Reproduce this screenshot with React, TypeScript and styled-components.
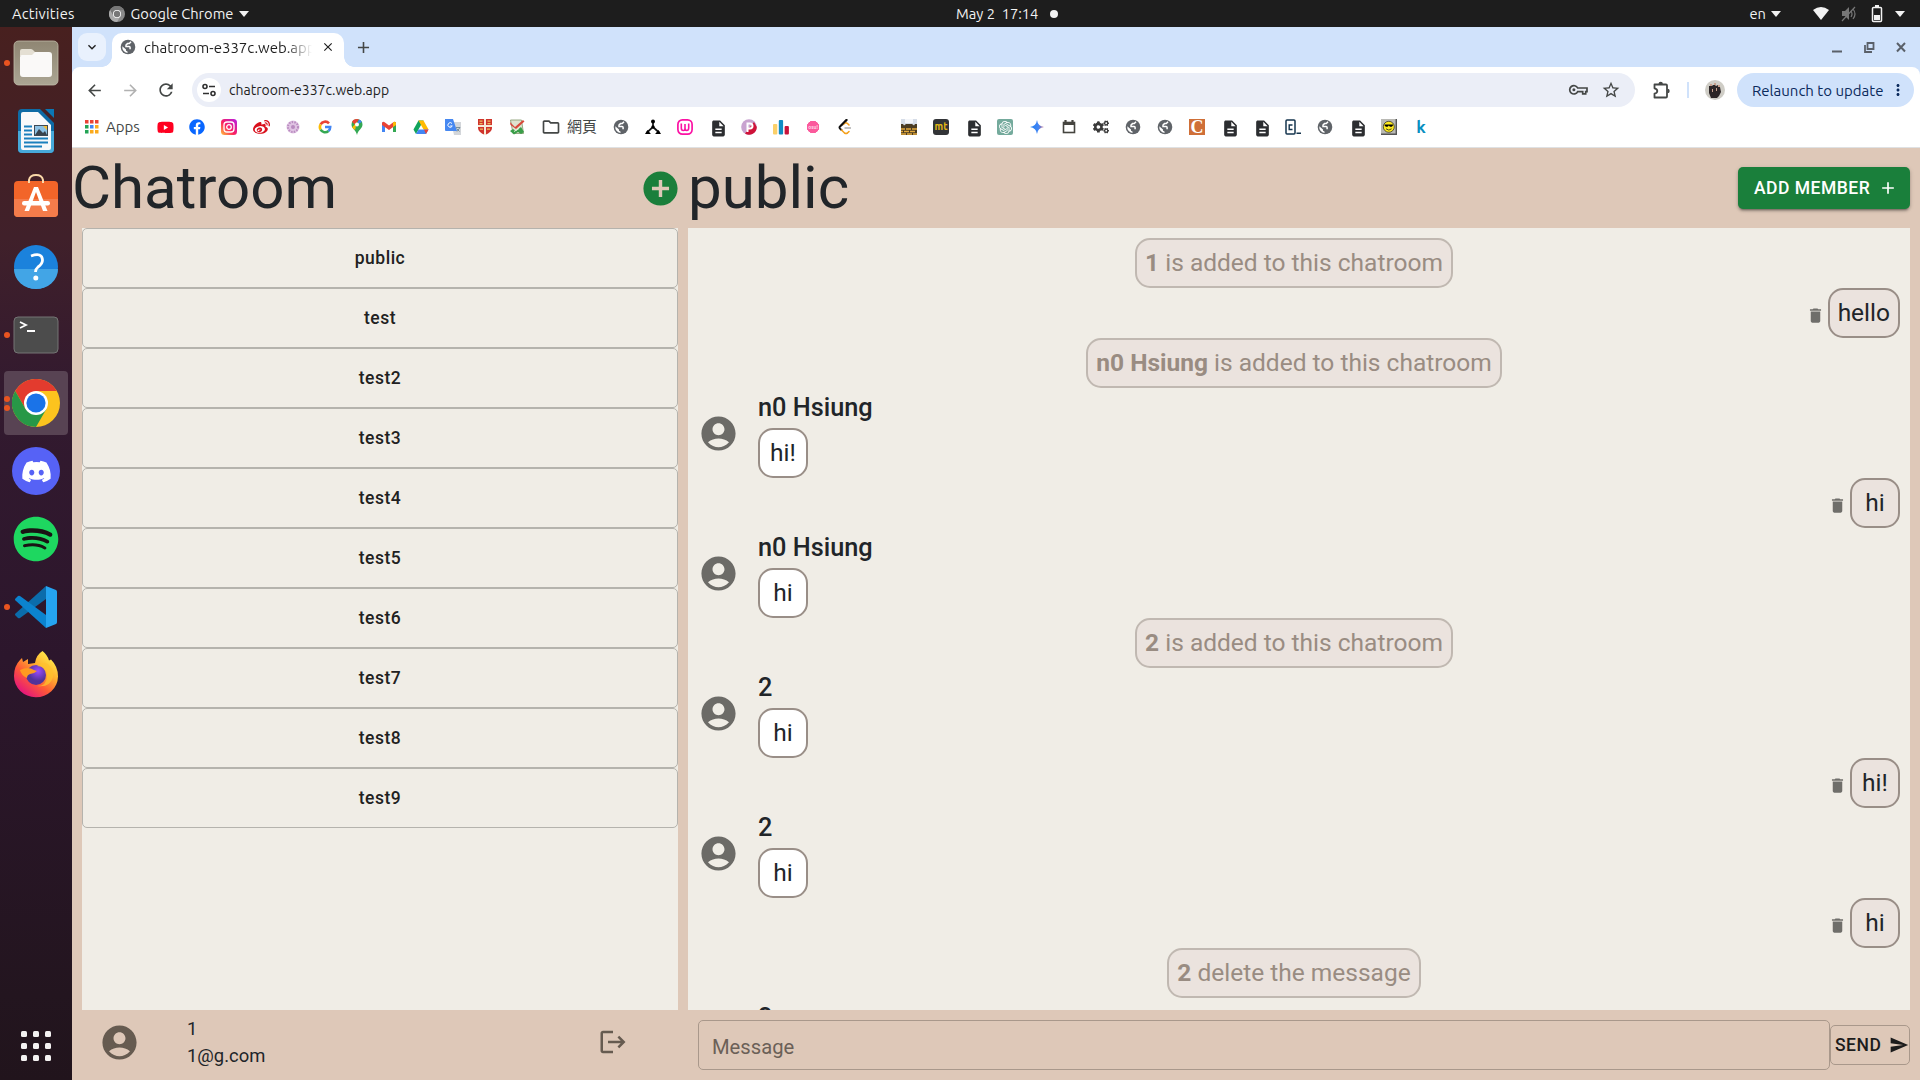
import React from "react";
import styled, { createGlobalStyle, css } from "styled-components";
import {
  MdAccountCircle,
  MdAdd,
  MdAddCircle,
  MdArrowBack,
  MdArrowForward,
  MdClose,
  MdDelete,
  MdExpandMore,
  MdMoreVert,
  MdOutlineFolder,
  MdRefresh,
  MdSend,
  MdStarBorder,
  MdDescription,
} from "react-icons/md";
import { FaDiscord, FaSpotify, FaFacebook, FaYoutube, FaWeibo, FaCogs } from "react-icons/fa";
import { SiOpenai } from "react-icons/si";

const ui = `Ubuntu, "Noto Sans", "Noto Sans CJK TC", sans-serif`;

const Global = createGlobalStyle`
  *, *::before, *::after { box-sizing: border-box; }
  body { margin: 0; background: #1d1d1d; overflow: hidden; }
  svg { display: block; flex: none; }
  button { font: inherit; margin: 0; padding: 0; border: 0; background: none; }
`;

const Desktop = styled.div`
  width: 1920px;
  height: 1080px;
  display: grid;
  grid-template: 27px 1053px / 72px 1848px;
  font-family: ${ui};
  overflow: hidden;
`;

/* ---------- system bar ---------- */
const TopBar = styled.header`
  grid-column: 1 / 3;
  display: grid;
  grid-template-columns: 944px auto 1fr;
  align-items: center;
  padding: 0 13px 0 12px;
  background: #1d1d1d;
  color: #f2f2f2;
  font-size: 14.67px;
  line-height: 27px;
  white-space: pre;
`;
const BarGroup = styled.div<{ $gap?: number; $end?: boolean }>`
  display: flex;
  align-items: center;
  gap: ${(p) => p.$gap ?? 6}px;
  justify-content: ${(p) => (p.$end ? "flex-end" : "flex-start")};
`;
const BarText = styled.span<{ $track?: number; $after?: number }>`
  letter-spacing: ${(p) => p.$track ?? 0}px;
  margin-right: ${(p) => p.$after ?? 0}px;
`;
const Caret = styled.i<{ $before?: number; $after?: number }>`
  border: 5px solid transparent;
  border-top: 6px solid #f2f2f2;
  border-bottom: 0;
  margin-left: ${(p) => p.$before ?? 0}px;
  margin-right: ${(p) => p.$after ?? 0}px;
`;
const Notice = styled.i`
  width: 8px;
  height: 8px;
  border-radius: 50%;
  background: #f2f2f2;
`;
const Tray = styled.span<{ $before: number }>`
  margin-left: ${(p) => p.$before}px;
`;

/* ---------- dock ---------- */
const Dock = styled.nav`
  display: flex;
  flex-direction: column;
  justify-content: space-between;
  padding: 4px 0 19px;
  background: linear-gradient(180deg, #48201f 0%, #40202a 20%, #331a2f 34%, #2c162c 60%, #23151f 92%, #21141c 100%);
`;
const DockItem = styled.div<{ $active?: boolean }>`
  position: relative;
  width: 64px;
  height: 64px;
  margin: 0 4px 4px;
  display: grid;
  place-items: center;
  border-radius: 4px;
  background: ${(p) => (p.$active ? "#584353" : "transparent")};
`;
const Running = styled.span`
  position: absolute;
  left: 0;
  top: 0;
  height: 100%;
  display: flex;
  flex-direction: column;
  justify-content: center;
  gap: 3px;
`;
const Dot = styled.i`
  width: 6px;
  height: 6px;
  border-radius: 50%;
  background: #e95420;
`;
const Launcher = styled.div`
  display: grid;
  grid-template-columns: repeat(3, 6px);
  gap: 6px;
  justify-content: center;
  i {
    height: 6px;
    border-radius: 1.5px;
    background: #f4f2f2;
  }
`;

/* ---------- browser ---------- */
const Browser = styled.main`
  display: grid;
  grid-template-rows: 40px 46px 34px 1px 932px;
  background: #fff;
  overflow: hidden;
`;
const Tabs = styled.div`
  display: flex;
  align-items: flex-end;
  background: #d0e2fb;
  padding-left: 6px;
`;
const TabSearch = styled.button`
  width: 28px;
  height: 28px;
  margin: 0 6px 6px 0;
  border-radius: 9px;
  background: #e9f1fd;
  display: grid;
  place-items: center;
  color: #1f1f1f;
`;
const Tab = styled.div`
  position: relative;
  width: 232px;
  height: 34px;
  padding: 0 9px 6px 8px;
  display: flex;
  align-items: center;
  background: #fff;
  border-radius: 10px 10px 0 0;
  color: #1f1f1f;
  font-size: 15px;
  &::before,
  &::after {
    content: "";
    position: absolute;
    bottom: 0;
    width: 10px;
    height: 10px;
  }
  &::before {
    left: -10px;
    background: radial-gradient(circle at 0 0, transparent 9.5px, #fff 10px);
  }
  &::after {
    right: -10px;
    background: radial-gradient(circle at 100% 0, transparent 9.5px, #fff 10px);
  }
`;
const TabTitle = styled.span`
  flex: 1;
  margin-left: 8px;
  margin-right: 9px;
  overflow: hidden;
  white-space: nowrap;
  -webkit-mask-image: linear-gradient(90deg, #000 84%, transparent);
  mask-image: linear-gradient(90deg, #000 84%, transparent);
`;
const NewTab = styled.button`
  margin: 0 0 10px 10px;
  color: #444746;
`;
const WindowKeys = styled.div`
  margin: 0 11px 12px auto;
  display: flex;
  align-items: center;
  gap: 16px;
  color: #5a6069;
`;
const Toolbar = styled.div`
  display: flex;
  align-items: center;
  padding: 0 6px 0 12px;
  color: #444746;
  background: linear-gradient(#d0e2fb, #d0e2fb) no-repeat;
  background-size: 100% 10px;
  position: relative;
  z-index: 0;
  &::before {
    content: "";
    position: absolute;
    inset: 0;
    z-index: -1;
    background: #fff;
    border-radius: 8px 8px 0 0;
  }
`;
const NavKey = styled.button<{ $dim?: boolean }>`
  width: 20px;
  margin-right: 16px;
  display: grid;
  justify-content: end;
  color: ${(p) => (p.$dim ? "#b1b1b1" : "#444746")};
`;
const Omnibox = styled.div`
  width: 1443px;
  height: 34px;
  border-radius: 17px;
  background: #ebeef7;
  display: flex;
  align-items: center;
  padding: 0 14px 0 5px;
  color: #1f1f1f;
  font-size: 14px;
`;
const SiteInfo = styled.span`
  width: 24px;
  height: 24px;
  border-radius: 50%;
  background: #fff;
  display: grid;
  place-items: center;
  margin-right: 8px;
`;
const Url = styled.span`
  flex: 1;
`;
const Star = styled.span`
  margin-left: 13px;
  color: #444746;
`;
const Extension = styled.span`
  margin-left: 16px;
`;
const Rule = styled.i`
  width: 2px;
  height: 16px;
  background: #d0e2fb;
  margin: 0 16px 0 16px;
`;
const Relaunch = styled.button`
  width: 177px;
  height: 34px;
  margin-left: 12px;
  padding: 0 7px 0 15px;
  border-radius: 17px;
  background: #d0e2fb;
  color: #0b2a5c;
  display: flex;
  align-items: center;
  justify-content: space-between;
  font-size: 15px;
  white-space: nowrap;
`;
const Bookmarks = styled.div`
  display: flex;
  align-items: center;
  gap: 16px;
  padding: 0 0 6px 12px;
  color: #444746;
  font-size: 15px;
`;
const Labelled = styled.div<{ $width: number; $gap: number }>`
  width: ${(p) => p.$width}px;
  height: 18px;
  line-height: 18px;
  display: flex;
  align-items: center;
  gap: ${(p) => p.$gap}px;
  white-space: nowrap;
`;
const Mark = styled.span<{ $bg?: string; $fg?: string; $round?: number; $size?: number; $serif?: boolean }>`
  width: 16px;
  height: 16px;
  display: grid;
  place-items: center;
  background: ${(p) => p.$bg ?? "transparent"};
  color: ${(p) => p.$fg ?? "#3c4043"};
  border-radius: ${(p) => p.$round ?? 0}px;
  font: 700 ${(p) => p.$size ?? 10}px/16px ${(p) => (p.$serif ? `"Liberation Serif", serif` : ui)};
`;
const Divider = styled.i`
  background: #dfe1e3;
`;

/* ---------- chat page ---------- */
const Page = styled.section`
  display: grid;
  grid-template: 80px 782px 70px / 616px 1232px;
  background: #dec8b8;
  color: #212529;
  font-family: Roboto, sans-serif;
  overflow: hidden;
`;
const Head = styled.div`
  display: flex;
  align-items: center;
  justify-content: space-between;
  padding-right: 10px;
`;
const Title = styled.h1`
  margin: 0;
  font-weight: 400;
  font-size: 60px;
  line-height: 72px;
`;
const RoundAdd = styled.button`
  margin-right: -2.5px;
  color: #1a7f3b;
`;
const AddMember = styled.button`
  width: 172px;
  height: 42px;
  display: flex;
  align-items: center;
  padding-left: 16px;
  gap: 8px;
  border-radius: 5px;
  background: #1a7f3b;
  color: #fff;
  font-weight: 500;
  font-size: 17.5px;
  letter-spacing: 0.5px;
  white-space: nowrap;
  box-shadow: 0 3px 2px -2px rgba(0, 0, 0, 0.3), 0 2px 3px rgba(0, 0, 0, 0.2), 0 1px 5px rgba(0, 0, 0, 0.12);
`;
const Rooms = styled.div`
  margin: 0 10px;
  background: #f0ede6;
`;
const Room = styled.button`
  display: block;
  width: 100%;
  height: 60px;
  border: 1px solid #b5b3ad;
  border-radius: 5px;
  color: #212121;
  font-weight: 500;
  font-size: 17.5px;
  letter-spacing: 0.5px;
`;
const Feed = styled.div`
  margin-right: 10px;
  padding: 10px;
  background: #f0ede6;
  overflow: hidden;
  font-size: 24.5px;
`;
const Line = styled.div<{ $side: "center" | "right" }>`
  display: flex;
  align-items: center;
  justify-content: ${(p) => (p.$side === "center" ? "center" : "flex-end")};
  padding-right: ${(p) => (p.$side === "center" ? 10 : 0)}px;
  height: 50px;
`;
const Bubble = styled.div<{ $tone: "own" | "other" | "system" }>`
  height: 50px;
  min-width: 50px;
  width: fit-content;
  padding: 0 8px;
  border: 2px solid #998e87;
  border-radius: 15px;
  line-height: 46px;
  text-align: center;
  white-space: nowrap;
  background: ${(p) => (p.$tone === "other" ? "#fff" : "#ebe3de")};
  ${(p) =>
    p.$tone === "system" &&
    css`
      border-color: #c0b8b1;
      color: #998c82;
    `}
`;
const Trash = styled.span`
  margin: 4px 3px 0 0;
  color: #6f6e6a;
`;
const Incoming = styled.div`
  height: 90px;
  display: grid;
  grid-template-columns: 60px auto;
  align-items: center;
  color: #6c6b67;
  > svg {
    margin-top: 1px;
  }
`;
const Sender = styled.div`
  color: #212529;
  height: 90px;
  > p {
    margin: 0;
    height: 40px;
    font-weight: 500;
    font-size: 25.3px;
    line-height: 39px;
  }
`;
const Account = styled.div`
  display: flex;
  align-items: center;
  padding: 0 60px 6px 26.5px;
  color: #665b50;
`;
const Who = styled.div`
  flex: 1;
  margin-left: 47.5px;
  color: #212529;
  font-size: 18.4px;
  line-height: 27px;
`;
const Composer = styled.div`
  display: flex;
  align-items: center;
  padding: 0 10px;
`;
const Field = styled.div`
  width: 1132px;
  height: 50px;
  padding: 2px 13px 0;
  border: 1px solid #a9988b;
  border-radius: 5px;
  color: #6b6057;
  font-size: 20.2px;
  line-height: 48px;
`;
const Send = styled.button`
  width: 80px;
  height: 40px;
  display: flex;
  align-items: center;
  justify-content: space-between;
  padding: 0 0 0 4px;
  border: 1px solid #a9988b;
  border-radius: 5px;
  color: #1c1c1c;
  font-weight: 500;
  font-size: 17.5px;
  letter-spacing: 0.5px;
`;

/* ---------- dock artwork ---------- */
const FilesArt = () => (
  <svg width="46" height="46" viewBox="0 0 46 46">
    <defs>
      <linearGradient id="fa" x2="0" y2="1"><stop stopColor="#8f8673" /><stop offset="1" stopColor="#aba593" /></linearGradient>
    </defs>
    <rect x="1" y="1" width="44" height="44" rx="4.5" fill="url(#fa)" stroke="#c2bca9" strokeWidth=".8" />
    <path d="M7 16v-5q0-2 2-2h9q1.500 0 2.500 1.500L22 12h14v6z" fill="#e4dfd3" />
    <path d="M7 17q0-2 2-2h10l3-3h14q3 0 3 3v19q0 3-3 3H10q-3 0-3-3z" fill="#faf9f8" />
  </svg>
);
const WriterArt = () => (
  <svg width="38" height="46" viewBox="0 0 38 46">
    <path d="M5 1h18l14 14v26q0 4-4 4H5q-4 0-4-4V5q0-4 4-4z" fill="#0e6ba5" />
    <path d="M1 23h36v18q0 4-4 4H5q-4 0-4-4z" fill="#47a9da" />
    <path d="M6 4h15l13 13v23q0 2-2 2H6q-2 0-2-2V6q0-2 2-2z" fill="#f8f9fa" />
    <path d="M28 1h9v9z" fill="#0b77b5" />
    <path d="M7 18.500h8M7 22.500h8M7 26.500h8M7 30.500h24M7 34.500h24M7 38.500h18" stroke="#1a80bd" strokeWidth="2" />
    <rect x="17" y="17" width="14" height="11" fill="#3d4a55" />
    <path d="M18 18h12v9H18z" fill="#8bc1e4" /><path d="m18 27 4-6 4 4 2-2 2 4z" fill="#38434d" />
    <path d="M26 18h4v4z" fill="#f4bd35" />
  </svg>
);
const SoftwareArt = () => (
  <svg width="46" height="46" viewBox="0 3 46 46" overflow="visible">
    <rect x="1" y="8" width="44" height="36" rx="4" fill="#f26529" />
    <path d="M1 26h44v14q0 4-4 4H5q-4 0-4-4z" fill="#f47c4b" />
    <path d="M16 10V7q1-5 7-5t7 5v3" fill="none" stroke="#fbd9a8" strokeWidth="2" />
    <path d="M21 14h4l9.500 24h-4.500L23 19l-7 19h-4.500z" fill="#fff" />
    <rect x="9" y="28" width="28" height="4.500" rx="2.200" fill="#fff" />
  </svg>
);
const HelpArt = () => (
  <svg width="46" height="46" viewBox="0 0 46 46">
    <circle cx="23" cy="23" r="22" fill="#1b82dc" />
    <path d="M1 25a22 20 0 0 0 44 0z" fill="#42a5e6" />
    <path d="M18 12q11-4 11.500 4 0 4-4.500 7-2.500 2-2.500 5" fill="none" stroke="#fff" strokeWidth="2.800" />
    <circle cx="22.800" cy="34" r="2.500" fill="#fff" />
  </svg>
);
const TerminalArt = () => (
  <svg width="46" height="38" viewBox="0 0 46 38">
    <rect x="1" y="1" width="44" height="36" rx="4" fill="#4c4c4c" stroke="#747474" />
    <path d="m7 6 6 3-6 3M14 15h8" fill="none" stroke="#fff" strokeWidth="1.800" />
  </svg>
);
const ChromeArt = ({ size = 48, mono = false }: { size?: number; mono?: boolean }) => (
  <svg width={size} height={size} viewBox="0 0 48 48">
    <circle cx="24" cy="24" r="24" fill={mono ? "#8a8a8a" : "#fcc31e"} />
    <path d="M3.200 12A24 24 0 0 1 44.800 12H24L13.600 30z" fill={mono ? "#777" : "#e33b2e"} />
    <path d="M3.200 12A24 24 0 0 0 24 48l10.400-18L24 36l-10.400-6z" fill={mono ? "#aaa" : "#279847"} />
    <circle cx="24" cy="24" r="12" fill="#fff" />
    <circle cx="24" cy="24" r="9.600" fill={mono ? "#777" : "#1a73e8"} />
  </svg>
);
const Disc = styled.span<{ $size: number; $bg: string }>`
  width: ${(p) => p.$size}px;
  height: ${(p) => p.$size}px;
  border-radius: 50%;
  display: grid;
  place-items: center;
  background: ${(p) => p.$bg};
`;
const DiscordArt = () => (
  <Disc $size={48} $bg="#5662f6"><FaDiscord size={31} color="#fff" /></Disc>
);
const SpotifyArt = () => (
  <Disc $size={46} $bg="radial-gradient(circle, #191414 19px, transparent 20px)"><FaSpotify size={46} color="#1ed760" /></Disc>
);
const CodeArt = () => (
  <svg width="42" height="42" viewBox="0 0 42 42">
    <path d="M31 0v13L5 32q-1 .7-2 0l-2.500-2.500q-1-1 0-2z" fill="#0b6cab" />
    <path d="M31 42V29L5 10q-1-.7-2 0L.5 12.500q-1 1 0 2z" fill="#0b83cf" />
    <path d="m31 0 10 4q1 .5 1 2v30q0 1.500-1 2l-10 4z" fill="#25a4f1" />
  </svg>
);
const FirefoxArt = () => (
  <svg width="46" height="46" viewBox="0 1 46 46" overflow="visible">
    <defs>
      <linearGradient id="ff" x1=".9" y1=".1" x2=".25" y2=".95">
        <stop stopColor="#fff04e" /><stop offset=".35" stopColor="#ffb02e" /><stop offset=".65" stopColor="#ff5a36" /><stop offset="1" stopColor="#e5177b" />
      </linearGradient>
      <radialGradient id="fp" cx=".6" cy=".3"><stop stopColor="#9c4bff" /><stop offset="1" stopColor="#503399" /></radialGradient>
    </defs>
    <path d="M29.500 0q5 4 6.500 9.500l2-1q7 7 7 17A22 21 0 0 1 1 25Q1 15 7 9l2-2 1 4 5-3v5l7-1q1-8 7.500-12z" fill="url(#ff)" />
    <circle cx="23" cy="24" r="10" fill="url(#fp)" />
    <path d="M7 19q8-4 14 0l3 1q-3 3-7 3-3 1-3 4-6-3-7-8z" fill="#ff9a20" />
    <path d="M24 15q10 0 10 10t-10 10q13 2 16-9 1-10-7-14-4-1-9 3z" fill="#ffc22e" opacity=".75" />
  </svg>
);

/* ---------- bookmark artwork ---------- */
const Svg = ({ children }: { children: React.ReactNode }) => (
  <svg width="16" height="16" viewBox="0 0 16 16">{children}</svg>
);
const Globe = () => (
  <Svg>
    <circle cx="8" cy="8" r="7.300" fill="#5f6368" />
    <path d="M11 2.800 9.300 4.600H7.500L6 6v1.400h3.200q.9 0 .9 1v1.800" fill="none" stroke="#fff" strokeWidth="1.500" />
    <path d="M2.300 7.200 6 10.500v1.300l1.500.8v1.300A6 6 0 0 1 2.300 7.200z" fill="#fff" />
  </Svg>
);
const Doc = () => <MdDescription size={19} color="#2b2d30" />;
const AppsGrid = () => (
  <Svg>
    {["#ea4335", "#ea4335", "#ea4335", "#23a455", "#4285f4", "#fbaa1c", "#23a455", "#fbaa1c", "#fbaa1c"].map((c, i) => (
      <rect key={i} x={1 + (i % 3) * 5} y={1 + Math.floor(i / 3) * 5} width="3.500" height="3.500" fill={c} />
    ))}
  </Svg>
);
const Insta = () => (
  <Svg>
    <defs><linearGradient id="ig" x1="0" y1="1" x2="1" y2="0"><stop stopColor="#ffc33a" /><stop offset=".45" stopColor="#fb1f60" /><stop offset="1" stopColor="#b31fe8" /></linearGradient></defs>
    <rect width="16" height="16" rx="3.500" fill="url(#ig)" />
    <rect x="3" y="3" width="10" height="10" rx="3" fill="none" stroke="#fff" strokeWidth="1.300" />
    <circle cx="8" cy="8" r="2.300" fill="none" stroke="#fff" strokeWidth="1.300" />
  </Svg>
);
const Google = () => (
  <Svg>
    <g fill="none" strokeWidth="2.600">
      <path d="M12 4.300A5.200 5.200 0 0 0 3.600 5.400" stroke="#ea4335" />
      <path d="M3.600 5.400a5.200 5.200 0 0 0 0 5.200" stroke="#fbbc05" />
      <path d="M3.600 10.600A5.200 5.200 0 0 0 11.500 12" stroke="#34a853" />
      <path d="M11.500 12q1.700-1.500 1.700-4H8" stroke="#4285f4" />
    </g>
  </Svg>
);
const Pin = () => (
  <Svg>
    <path d="M8 0a5.500 5.500 0 0 1 5.500 5.500C13.500 9.500 9 11 8 16 7 11 2.500 9.500 2.500 5.500A5.500 5.500 0 0 1 8 0z" fill="#34a853" />
    <path d="M8 0Q4 0 3 3l3 2.500L10 .4z" fill="#ea4335" /><path d="M10 .4 8 5.500 12.900 3Q12 1 10 .4z" fill="#4285f4" /><path d="M3 8.500 8 3 6 11z" fill="#fbbc04" />
    <circle cx="8" cy="5.500" r="2" fill="#fff" />
  </Svg>
);
const Gmail = () => (
  <Svg>
    <path d="M1 3v10h3V6z" fill="#4285f4" /><path d="M15 3v10h-3V6z" fill="#34a853" />
    <path d="M1 4q1-2 3-.6l4 3 4-3Q14 2 15 4v2l-7 5-7-5z" fill="#ea4335" /><path d="M12 3.400Q14 2 15 4v2l-3 2z" fill="#fbbc04" />
  </Svg>
);
const Drive = () => (
  <Svg>
    <path d="M5.500 1.500h5L8 6 3 15 .5 10.500z" fill="#10a35b" /><path d="M5.500 1.500h5l5 9h-5z" fill="#ffba00" /><path d="m3 15 2.500-4.500h10L13 15z" fill="#4285f4" /><path d="M11 10.500h4.500L13 15z" fill="#ea4335" />
  </Svg>
);
const Translate = () => (
  <Svg>
    <path d="M6 3h10v13H9z" fill="#d3d6da" /><path d="M0 0h8l4 12H1q-1 0-1-1z" fill="#4688f1" />
    <path d="M7 4.500A2.300 2.300 0 1 0 7.300 7H5.200" fill="none" stroke="#fff" /><path d="M11 8.500h4l-3 4m-.5-3 3 3" fill="none" stroke="#607d8b" strokeWidth=".8" />
  </Svg>
);
const Shield = () => (
  <Svg>
    <path d="M1 0h14v9q0 4-7 7-7-3-7-7z" fill="#d0342c" /><path d="M8 0v16M1 7h14" stroke="#f6ecd6" strokeWidth="2" />
    <path d="M2.500 1.500h3v1.300h-3zM10.500 1.500h3v1.300h-3zM2.500 4h3v1.300h-3zM10.500 4h3v1.300h-3zM3 9.500h3v1.300H3zM10 9.500h3v1.300h-3z" fill="#ecc15d" />
  </Svg>
);
const Pad = () => (
  <Svg>
    <path d="M1.500 1h11l2 13.500H4z" fill="#dfe3cf" stroke="#8fa078" strokeWidth=".9" /><path d="m1 3 5 5 8-7 1.500 1.500L7 10 1.500 6z" fill="#d8483a" /><path d="m1 12 3-2 3 2 5-4 3 5-3 2-3-2-4 2.500z" fill="#3a9e49" /><path d="m5 12.500 5-3" stroke="#dff0d8" />
  </Svg>
);
const Flower = () => (
  <Svg><circle cx="8" cy="8" r="6.500" fill="#e0c4e3" /><circle cx="8" cy="8" r="5" fill="none" stroke="#b98bc0" strokeWidth="2" strokeDasharray="1.500 1.200" /><circle cx="8" cy="8" r="2" fill="#b98bc0" /></Svg>
);
const Tripod = () => (
  <Svg><path d="M8 2v6L2 13.500M8 8l6 5.500" fill="none" stroke="#161616" strokeWidth="1.700" /><circle cx="8" cy="2.500" r="2" /><circle cx="8" cy="8" r="1.700" /><path d="M0 15 2.500 11l3.400 4zM10.100 15l3.400-4 2.500 4z" /></Svg>
);
const Woo = () => (
  <Svg><rect x=".9" y=".9" width="14.200" height="14.200" rx="4.500" fill="#fff" stroke="#fb12a4" strokeWidth="1.700" /><path d="M4.300 4.500V9q0 2.500 1.900 2.500T8 9V5v4q0 2.500 1.800 2.500T11.700 9V4.500" fill="none" stroke="#fb12a4" strokeWidth="1.600" /></Svg>
);
const Pitch = () => (
  <Svg><circle cx="8" cy="8" r="7.800" fill="#c9a3d0" /><path d="M15.800 8A7.800 7.800 0 0 1 4 14.600L13 3z" fill="#cf1238" /><path d="M6.500 13V4.500H9a2.300 2.300 0 0 1 0 5H7" fill="none" stroke="#fff" strokeWidth="2" /></Svg>
);
const Bars = () => (
  <Svg><rect y="5" width="4.300" height="10.500" rx="1" fill="#fad06a" /><rect x="5.800" y="1" width="4.300" height="14.500" rx="1" fill="#0f8cc4" /><rect x="11.600" y="7" width="4.300" height="8.500" rx="1" fill="#c8143c" /></Svg>
);
const Leet = () => (
  <Svg><path d="M9.500 1 3 7.500q-1 1 0 2.200L4.500 11" fill="none" stroke="#111" strokeWidth="1.900" strokeLinecap="round" /><path d="m4.500 11 3 3q1.500 1 3 0l1.500-1.500M6 5.500 8 4q1-.7 2.500.5L12 6" fill="none" stroke="#f5a11c" strokeWidth="1.600" strokeLinecap="round" /><path d="M9.500 1 4.500 6.200" stroke="#111" strokeWidth="1.900" strokeLinecap="round" /><path d="M7.500 9H14" stroke="#b3b3b3" strokeWidth="1.600" /></Svg>
);
const Bricks = () => (
  <Svg><rect width="16" height="7" fill="#d6dde8" /><path d="M4 0h8v4H4z" fill="#f4f6fa" /><path d="M0 5h2l1 1.500 2-1.500h6l2 1.500L14 5h2v11H0z" fill="#4a3b22" /><path d="M0 10h4m1 0h5m1 0h5M0 12.500h2m1 0h5m1 0h5M0 15h5m1 0h5m1 0h4" stroke="#e2a93c" strokeWidth="1.700" /></Svg>
);
const Spark = () => (
  <Svg><defs><linearGradient id="sp"><stop stopColor="#1c7cf0" /><stop offset=".6" stopColor="#4285f4" /><stop offset="1" stopColor="#c46a85" /></linearGradient></defs><path d="M8 1q.8 6.200 7 7-6.200.8-7 7-.8-6.200-7-7 6.200-.8 7-7z" fill="url(#sp)" /></Svg>
);
const Calendar = () => (
  <Svg><rect x="2.500" y="3.500" width="11" height="10" fill="none" stroke="#45443f" strokeWidth="1.600" /><path d="M2 4.800h12M4.500 1v3M11.500 1v3" stroke="#45443f" strokeWidth="2.200" /></Svg>
);
const Box = () => (
  <Svg><rect x="1" y="1" width="9" height="14" rx="1" fill="none" stroke="#14344d" strokeWidth="1.500" /><path d="M7.500 6H4.200v4.500h3.300M11.500 14.300H16" fill="none" stroke="#14344d" strokeWidth="1.400" /></Svg>
);
const Smiley = () => (
  <Svg><rect width="16" height="16" fill="#b9b9b4" /><path d="M15.300 0v15.300H0" fill="none" stroke="#555" strokeWidth="1.400" /><circle cx="7.800" cy="7.800" r="5.500" fill="#ffeb1e" stroke="#222" strokeWidth=".7" /><path d="M3.500 5.500h8.600v.8l-1.300 1.400H9L7.800 6.500 6.600 7.700H4.800L3.500 6.300z" /><path d="M5 9.800q2.800 2.600 5.600 0" fill="none" stroke="#222" strokeWidth=".8" /></Svg>
);
const LogoutIcon = () => (
  <svg width="30" height="30" viewBox="0 0 24 24" fill="currentColor">
    <path d="m17 7-1.410 1.410L18.170 11H8v2h10.170l-2.580 2.580L17 17l5-5zM4 5h8V3H4c-1.100 0-2 .9-2 2v14c0 1.100.9 2 2 2h8v-2H4z" />
  </svg>
);

const bookmarks: React.ReactNode[] = [
  <Mark><FaYoutube size={17} color="#ff0020" /></Mark>,
  <Mark><FaFacebook size={16} color="#0866ff" /></Mark>,
  <Insta />,
  <Mark><FaWeibo size={17} color="#d9101c" /></Mark>,
  <Flower />,
  <Google />,
  <Pin />,
  <Gmail />,
  <Drive />,
  <Translate />,
  <Shield />,
  <Pad />,
  <Labelled $width={56} $gap={6}><MdOutlineFolder size={20} />網頁</Labelled>,
  <Globe />,
  <Tripod />,
  <Woo />,
  <Mark><Doc /></Mark>,
  <Pitch />,
  <Bars />,
  <Mark $bg="radial-gradient(circle, #fb5a9c 6px, transparent 6.500px)" $fg="#ffd5e5" $size={5}>osu!</Mark>,
  <Leet />,
  <Mark />,
  <Bricks />,
  <Mark $bg="#323437" $fg="#e2b714" $round={3}>mt</Mark>,
  <Mark><Doc /></Mark>,
  <Mark $bg="#74aa9c" $round={2}><SiOpenai size={13} color="#fff" /></Mark>,
  <Spark />,
  <Calendar />,
  <Mark><FaCogs size={16} color="#3a3a3a" /></Mark>,
  <Globe />,
  <Globe />,
  <Mark $bg="#cf6f37" $fg="#fff" $size={18} $serif>C</Mark>,
  <Mark><Doc /></Mark>,
  <Mark><Doc /></Mark>,
  <Box />,
  <Globe />,
  <Mark><Doc /></Mark>,
  <Smiley />,
  <Mark $fg="#0a8fc0" $size={17}>k</Mark>,
];

const dock: { art: React.ReactNode; running?: number; active?: boolean }[] = [
  { art: <FilesArt />, running: 1 },
  { art: <WriterArt /> },
  { art: <SoftwareArt /> },
  { art: <HelpArt /> },
  { art: <TerminalArt />, running: 1 },
  { art: <ChromeArt />, running: 2, active: true },
  { art: <DiscordArt /> },
  { art: <SpotifyArt /> },
  { art: <CodeArt />, running: 1 },
  { art: <FirefoxArt /> },
];

const rooms = ["public", "test", "test2", "test3", "test4", "test5", "test6", "test7", "test8", "test9"];

type Message = { kind: "system" | "own" | "other"; from?: string; text?: string };
const messages: Message[] = [
  { kind: "system", from: "1", text: "is added to this chatroom" },
  { kind: "own", text: "hello" },
  { kind: "system", from: "n0 Hsiung", text: "is added to this chatroom" },
  { kind: "other", from: "n0 Hsiung", text: "hi!" },
  { kind: "own", text: "hi" },
  { kind: "other", from: "n0 Hsiung", text: "hi" },
  { kind: "system", from: "2", text: "is added to this chatroom" },
  { kind: "other", from: "2", text: "hi" },
  { kind: "own", text: "hi!" },
  { kind: "other", from: "2", text: "hi" },
  { kind: "own", text: "hi" },
  { kind: "system", from: "2", text: "delete the message" },
  { kind: "other", from: "2" },
];

const MessageRow = ({ kind, from, text }: Message) => {
  if (kind === "system")
    return (
      <Line $side="center">
        <Bubble $tone="system"><b>{from}</b> {text}</Bubble>
      </Line>
    );
  if (kind === "own")
    return (
      <Line $side="right">
        <Trash><MdDelete size={19} /></Trash>
        <Bubble $tone="own">{text}</Bubble>
      </Line>
    );
  return (
    <Incoming>
      <MdAccountCircle size={41} />
      <Sender>
        <p>{from}</p>
        {text && <Bubble $tone="other">{text}</Bubble>}
      </Sender>
    </Incoming>
  );
};

export default function App() {
  return (
    <Desktop>
      <Global />
      <TopBar>
        <BarGroup>
          <BarText $track={0.25} $after={28}>Activities</BarText>
          <ChromeArt size={16} mono />
          <BarText>Google Chrome</BarText>
          <Caret />
        </BarGroup>
        <BarGroup $gap={12}>
          <BarText>May 2  17:14</BarText>
          <Notice />
        </BarGroup>
        <BarGroup $end $gap={5}>
          <BarText>en</BarText>
          <Caret $after={27} />
          <svg width="16" height="16" viewBox="0 0 16 16"><path d="M0 4q8-6 16 0L8 14z" fill="#f2f2f2" /></svg>
          <Tray $before={7}>
            <svg width="16" height="16" viewBox="0 0 16 16">
              <path d="M1 5h3l4-4v13l-4-4H1z" fill="#777" /><path d="M10 5q2 3 0 6m2-8q4 5 0 10M1 15 14 1" fill="none" stroke="#777" strokeWidth="1.200" />
            </svg>
          </Tray>
          <Tray $before={9}>
            <svg width="12" height="18" viewBox="0 0 12 18">
              <rect x="1.500" y="2.500" width="9" height="14" rx="1" fill="none" stroke="#f2f2f2" strokeWidth="1.500" /><path d="M4 0h4v2H4zM3 10h6v5H3z" fill="#f2f2f2" />
            </svg>
          </Tray>
          <Caret $before={7} $after={2} />
        </BarGroup>
      </TopBar>

      <Dock>
        <div>
          {dock.map((d, i) => (
            <DockItem key={i} $active={d.active}>
              {d.art}
              {d.running && (
                <Running>{Array.from({ length: d.running }, (_, k) => <Dot key={k} />)}</Running>
              )}
            </DockItem>
          ))}
        </div>
        <Launcher>{Array.from({ length: 9 }, (_, i) => <i key={i} />)}</Launcher>
      </Dock>

      <Browser>
        <Tabs>
          <TabSearch><MdExpandMore size={16} /></TabSearch>
          <Tab>
            <Globe />
            <TabTitle>chatroom-e337c.web.app</TabTitle>
            <MdClose size={14} />
          </Tab>
          <NewTab><MdAdd size={19} /></NewTab>
          <WindowKeys>
            <svg width="16" height="16" viewBox="0 0 16 16"><path d="M3 12.500h10" stroke="currentColor" strokeWidth="2" /></svg>
            <svg width="16" height="16" viewBox="0 0 16 16"><path d="M6.500 4h6v6h-6zM4 6v7h7" fill="none" stroke="currentColor" strokeWidth="1.800" /></svg>
            <svg width="16" height="16" viewBox="0 0 16 16"><path d="m4 4 8 8.500m0-8.500-8 8.500" stroke="currentColor" strokeWidth="2" /></svg>
          </WindowKeys>
        </Tabs>
        <Toolbar>
          <NavKey><MdArrowBack size={19} /></NavKey>
          <NavKey $dim><MdArrowForward size={19} /></NavKey>
          <NavKey><MdRefresh size={20} /></NavKey>
          <Omnibox>
            <SiteInfo>
              <svg width="16" height="16" viewBox="0 0 16 16" fill="none" stroke="#303030" strokeWidth="1.600">
                <circle cx="4" cy="4.500" r="2" /><path d="M8 4.500h6M2 11.500h6" /><circle cx="12" cy="11.500" r="2" />
              </svg>
            </SiteInfo>
            <Url>chatroom-e337c.web.app</Url>
            <svg width="20" height="14" viewBox="0 0 20 14" fill="none" stroke="#444746" strokeWidth="1.700">
              <path d="M9.700 5H19v3.600h-1.300v2.300h-3V8.600h-5A4.200 4.200 0 1 1 9.700 5z" /><circle cx="5.900" cy="6.800" r="1.500" fill="#444746" stroke="none" />
            </svg>
            <Star><MdStarBorder size={20} /></Star>
          </Omnibox>
          <Extension>
            <svg width="20" height="20" viewBox="0 0 20 20" fill="none" stroke="#444746" strokeWidth="1.800" strokeLinejoin="round">
              <path d="M3.500 4.500H15q1 0 1 1v11q0 1-1 1H3.500v-3.800q2.800-.6 2.800-2.700T3.500 8.300z" />
              <path d="M7.500 4a2.200 2.200 0 0 1 4.400 0zM16.500 8.800a2.200 2.200 0 0 1 0 4.400z" fill="#444746" stroke="none" />
            </svg>
          </Extension>
          <Rule />
          <svg width="20" height="20" viewBox="0 0 20 20">
            <circle cx="10" cy="10" r="10" fill="#cfcdc6" />
            <path d="M4 6h3l1-1h2l1 1 2-1 2 2 1 5-2 4-2 2H6l-2-5z" fill="#2c2526" />
            <path d="M5 4h2v2H5zM9 3h2v2H9zM13 5h2v2h-2zM7 9h1v3H7zM11 8h1v3h-1z" fill="#c89f8c" />
          </svg>
          <Relaunch>Relaunch to update<MdMoreVert size={18} /></Relaunch>
        </Toolbar>
        <Bookmarks>
          <Labelled $width={57} $gap={6}><AppsGrid />Apps</Labelled>
          {bookmarks.map((b, i) => <React.Fragment key={i}>{b}</React.Fragment>)}
        </Bookmarks>
        <Divider />
        <Page>
          <Head>
            <Title>Chatroom</Title>
            <RoundAdd><MdAddCircle size={41} /></RoundAdd>
          </Head>
          <Head>
            <Title>public</Title>
            <AddMember>ADD MEMBER<MdAdd size={20} /></AddMember>
          </Head>
          <Rooms>{rooms.map((r) => <Room key={r}>{r}</Room>)}</Rooms>
          <Feed>{messages.map((m, i) => <MessageRow key={i} {...m} />)}</Feed>
          <Account>
            <MdAccountCircle size={41} />
            <Who><div>1</div><div>1@g.com</div></Who>
            <LogoutIcon />
          </Account>
          <Composer>
            <Field>Message</Field>
            <Send>SEND<MdSend size={20} /></Send>
          </Composer>
        </Page>
      </Browser>
    </Desktop>
  );
}
